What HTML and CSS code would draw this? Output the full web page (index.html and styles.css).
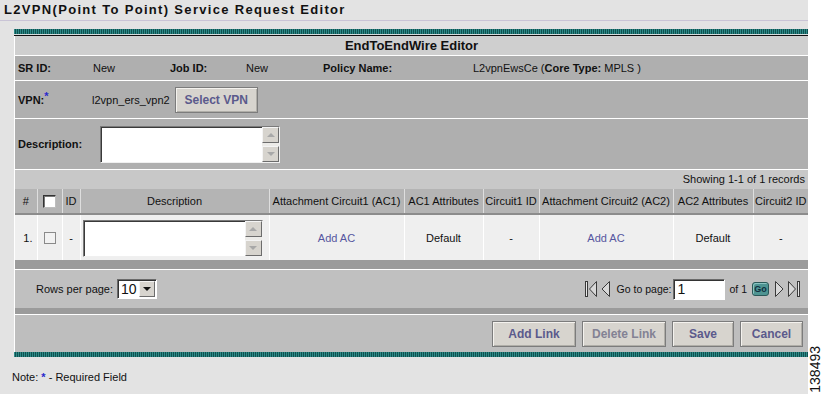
FILE: index.html
```html
<!DOCTYPE html>
<html>
<head>
<meta charset="utf-8">
<link rel="stylesheet" href="styles.css">
</head>
<body>
<div class="page">
  <div class="main">
    <h1 class="title">L2VPN(Point To Point) Service Request Editor</h1>
    <div class="panel">
      <div class="stripe"></div>
      <div class="blackline"></div>
      <div class="body">
        <div class="hdr">EndToEndWire Editor</div>
        <div class="info">
          <b>SR ID:</b><span>New</span><b>Job ID:</b><span>New</span><b>Policy Name:</b><span>L2vpnEwsCe (<b>Core Type:</b> MPLS )</span>
        </div>
        <div class="vpn">
          <b class="lbl">VPN:<sup class="req">*</sup></b>
          <span>l2vpn_ers_vpn2</span>
          <span class="btn vpnbtn">Select VPN</span>
        </div>
        <div class="desc">
          <b class="lbl">Description:</b>
          <div class="ta">
            <div class="ta-text"></div>
            <div class="sb"><span class="sbb"><i class="up"></i></span><span class="sbb"><i class="dn"></i></span></div>
          </div>
        </div>
        <div class="showing">Showing 1-1 of 1 records</div>
        <table class="grid">
          <colgroup>
            <col class="c1"><col class="c2"><col class="c3"><col class="c4"><col class="c5"><col class="c6"><col class="c7"><col class="c8"><col class="c9"><col class="c10">
          </colgroup>
          <thead>
            <tr>
              <th>#</th>
              <th><span class="cb hcb"></span></th>
              <th>ID</th>
              <th>Description</th>
              <th>Attachment Circuit1 (AC1)</th>
              <th>AC1 Attributes</th>
              <th>Circuit1 ID</th>
              <th>Attachment Circuit2 (AC2)</th>
              <th>AC2 Attributes</th>
              <th>Circuit2 ID</th>
            </tr>
          </thead>
          <tbody>
            <tr>
              <td class="num">1.</td>
              <td><span class="cb"></span></td>
              <td>-</td>
              <td class="tdta">
                <div class="ta">
                  <div class="ta-text"></div>
                  <div class="sb"><span class="sbb"><i class="up"></i></span><span class="sbb"><i class="dn"></i></span></div>
                </div>
              </td>
              <td><span class="link">Add AC</span></td>
              <td>Default</td>
              <td>-</td>
              <td><span class="link">Add AC</span></td>
              <td>Default</td>
              <td>-</td>
            </tr>
          </tbody>
        </table>
        <div class="darkbar"></div>
        <div class="pager">
          <div class="rpp">Rows per page:
            <span class="sel"><span class="selv">10</span><span class="selb"><i class="dn dark"></i></span></span>
          </div>
          <div class="nav">
            <svg class="i-first" width="13" height="16" viewBox="0 0 13 16"><rect x="0.5" y="0.5" width="2" height="15" fill="#e8e8e8" stroke="#3a3a3a"/><polygon points="11.5,0.5 4.5,8 11.5,15.5" fill="#d8d8d8" stroke="#3a3a3a"/></svg>
            <svg class="i-prev" width="9" height="16" viewBox="0 0 9 16"><polygon points="8.5,0.5 1,8 8.5,15.5" fill="#d8d8d8" stroke="#3a3a3a"/></svg>
            <span class="gtp">Go to page:</span>
            <span class="pin">1</span>
            <span class="of">of 1</span>
            <span class="go">Go</span>
            <svg class="i-next" width="9" height="16" viewBox="0 0 9 16"><polygon points="0.5,0.5 8,8 0.5,15.5" fill="#d8d8d8" stroke="#3a3a3a"/></svg>
            <svg class="i-last" width="13" height="16" viewBox="0 0 13 16"><polygon points="0.5,0.5 7.5,8 0.5,15.5" fill="#d8d8d8" stroke="#3a3a3a"/><rect x="9.5" y="0.5" width="2" height="15" fill="#e8e8e8" stroke="#3a3a3a"/></svg>
          </div>
        </div>
        <div class="darkbar thin"></div>
        <div class="actions">
          <span class="btn b-add">Add Link</span>
          <span class="btn b-del">Delete Link</span>
          <span class="btn b-save">Save</span>
          <span class="btn b-cancel">Cancel</span>
        </div>
      </div>
      <div class="stripe"></div>
    </div>
    <div class="note">Note: <span class="req">*</span> - Required Field</div>
  </div>
  <div class="side"><span class="fig">138493</span></div>
</div>
</body>
</html>
```

FILE: styles.css
```css
* { box-sizing: border-box; }
html, body { margin: 0; padding: 0; background: #ffffff; }
body { font-family: "Liberation Sans", Arial, sans-serif; font-size: 11px; color: #111; }

.page { display: flex; width: 822px; height: 394px; }
.main { width: 808px; height: 394px; background: #e3e3e3; display: flex; flex-direction: column; }
.side { width: 14px; display: flex; align-items: flex-end; justify-content: center; padding-bottom: 1px; }
.fig { writing-mode: vertical-rl; transform: rotate(180deg); font-size: 14px; color: #111; line-height: 12px; }

.title {
  margin: 0; height: 21px; padding: 1px 0 0 4px;
  font-size: 13px; font-weight: bold; letter-spacing: 1.32px; line-height: 18px;
  border-bottom: 1px solid #c9c4d6; color: #111;
}

.panel { margin: 8px 0 0 14px; width: 794px; }
.stripe { height: 5px; background: repeating-linear-gradient(90deg, #2f8a88 0 1px, #0f5250 1px 2px); }
.blackline { height: 2px; border-top: 1px solid #d8dede; border-bottom: 1px solid #111; }
.body { border-left: 1px solid #fff; }

.hdr { height: 20px; background: #cfcfcf; text-align: center; font-weight: bold; font-size: 13px; line-height: 20px; border-bottom: 1px solid #fff; }

.info {
  height: 25px; background: #afafaf; border-bottom: 1px solid #fff;
  display: grid; grid-template-columns: 75px 77px 76px 77px 150px 1fr;
  align-items: center; padding-left: 3px;
}
.info span { color: #111; }

.vpn { height: 38px; background: #afafaf; border-bottom: 1px solid #fff; display: flex; align-items: center; padding-left: 3px; }
.vpn .lbl { width: 74px; }
.req { color: #2a2acc; font-weight: bold; }
sup.req { font-size: 11px; vertical-align: 4px; line-height: 0; }

.btn {
  display: inline-flex; align-items: center; justify-content: center;
  height: 26px; background: #d7d4ce; color: #5b5a8c; font-weight: bold; font-size: 12px;
  border: 1px solid #7c7c7c; box-shadow: inset 1px 1px 0 #f4f2ee, inset -1px -1px 0 #b0aea8;
}
.vpnbtn { width: 83px; margin-left: 5px; }

.desc { height: 51px; background: #afafaf; border-bottom: 1px solid #fff; display: flex; align-items: center; padding-left: 3px; }
.desc .lbl { width: 82px; }

.ta { width: 180px; height: 37px; display: flex; background: #fff; border: 1px solid; border-color: #7a7a7a #f0f0f0 #f0f0f0 #7a7a7a; box-shadow: inset 1px 1px 0 #3a3a3a; }
.ta-text { flex: 1; }
.sb { width: 17px; display: flex; flex-direction: column; justify-content: space-between; background: #ecebe8; }
.sbb { width: 17px; height: 16px; background: #d7d4ce; border: 1px solid; border-color: #f4f4f4 #6c6c6c #6c6c6c #f4f4f4; display: flex; align-items: center; justify-content: center; }
i.up, i.dn { display: block; width: 0; height: 0; border-left: 4px solid transparent; border-right: 4px solid transparent; }
i.up { border-bottom: 4px solid #a8a8a8; }
i.dn { border-top: 4px solid #a8a8a8; }
i.dn.dark { border-top-color: #111; }

.showing { height: 19px; background: #c8c8c8; text-align: right; padding-right: 3px; line-height: 19px; font-size: 11px; }

.grid { width: 793px; border-collapse: collapse; table-layout: fixed; }
col.c1 { width: 22px; } col.c2 { width: 25px; } col.c3 { width: 18px; } col.c4 { width: 189px; }
col.c5 { width: 135px; } col.c6 { width: 79px; } col.c7 { width: 56px; } col.c8 { width: 134px; }
col.c9 { width: 80px; } col.c10 { width: 55px; }
.grid th, .grid td { padding: 0; text-align: center; font-weight: normal; white-space: nowrap; overflow: hidden; }
.grid th { height: 25px; background: #b4b4b4; border-left: 1px solid #dedede; border-bottom: 2px solid #8c8c8c; font-size: 11px; }
.grid td { height: 46px; background: #efefef; border-left: 1px solid #fff; }
.grid th:first-child, .grid td:first-child { border-left: none; }
.grid td.num { text-align: right; padding-right: 4px; }
.grid td.tdta { padding-left: 2px; }
.grid td.tdta .ta { margin-top: 1px; }
.cb { display: inline-block; width: 12px; height: 12px; vertical-align: middle; background: #f2f2f2; border: 1px solid #8a8a8a; }
.hcb { width: 13px; height: 13px; background: #fff; border-color: #333 #bdbdbd #bdbdbd #333; border-width: 1px; box-shadow: inset 1px 1px 0 #777; }
.link { color: #5656a0; }

.darkbar { height: 10px; background: #9b9b9b; border-bottom: 1px solid #fff; }
.darkbar.thin { height: 7px; }

.pager { height: 38px; background: #c0c0c0; display: flex; align-items: center; justify-content: space-between; padding: 0 7px 0 21px; }
.rpp { display: flex; align-items: center; }
.sel { display: inline-flex; margin-left: 4px; width: 40px; height: 20px; background: #fff; border: 1px solid; border-color: #6a6a6a #fff #fff #6a6a6a; box-shadow: inset 1px 1px 0 #333; }
.selv { flex: 1; font-size: 14px; line-height: 18px; padding-left: 3px; }
.selb { width: 16px; margin: 1px 1px 1px 0; background: #d7d4ce; border: 1px solid; border-color: #f4f4f4 #6c6c6c #6c6c6c #f4f4f4; display: flex; align-items: center; justify-content: center; }
.nav { display: flex; align-items: center; }
.nav svg { display: block; }
.i-first { margin-right: 3px; }
.i-prev { margin-right: 7px; }
.gtp { font-size: 10.5px; margin-right: 2px; }
.pin { width: 52px; height: 21px; background: #fff; border: 1px solid; border-color: #6a6a6a #fff #fff #6a6a6a; box-shadow: inset 1px 1px 0 #333; font-size: 14px; line-height: 19px; padding-left: 3px; }
.of { font-size: 10.5px; margin-left: 4px; margin-right: 5px; }
.go { width: 17px; height: 14px; background: #4e9492; border: 1px solid #2a5858; border-radius: 3px; color: #0e2e3e; font-size: 9px; font-weight: bold; display: inline-flex; align-items: center; justify-content: center; margin-right: 6px; box-shadow: inset 1px 1px 0 #8cc4c2; }
.i-next { margin-right: 4px; }

.actions { height: 37px; background: #bebebe; display: flex; align-items: center; justify-content: flex-end; padding-right: 5px; }
.actions .btn { margin-left: 6px; }
.b-add { width: 84px; margin-left: 0; }
.b-del { width: 84px; color: #838294; }
.b-save { width: 62px; }
.b-cancel { width: 63px; }

.note { margin-top: 13px; padding-left: 12px; line-height: 14px; font-size: 11px; }
```
